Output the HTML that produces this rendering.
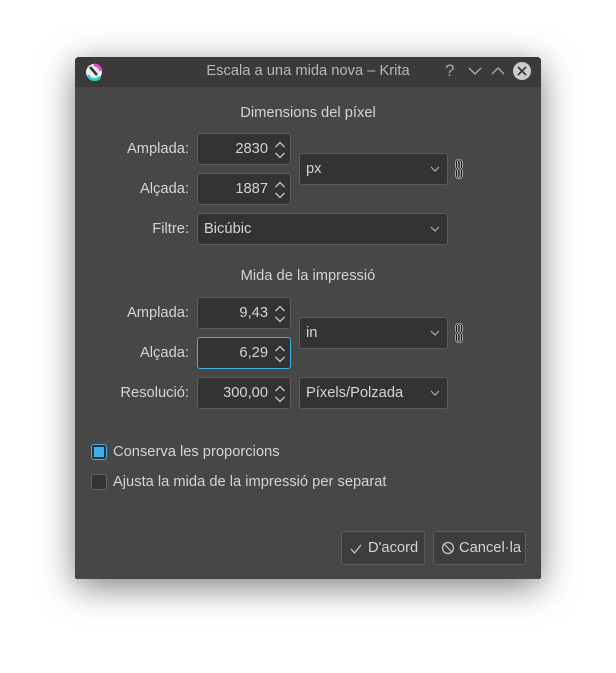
<!DOCTYPE html>
<html><head><style>
body{margin:0;width:616px;height:673px;background:#fff;font-family:"Liberation Sans","DejaVu Sans",sans-serif;font-size:14.7px;color:#d4d4d4;position:relative;overflow:hidden}
.win{position:absolute;left:75px;top:57px;width:466px;height:522px;background:#474747;border-radius:4px 4px 2px 2px;box-shadow:0 8px 34px rgba(0,0,0,.5)}
.tb{position:absolute;left:0;top:0;width:466px;height:30px;background:#3a3a3a;border-radius:4px 4px 0 0}
.a{position:absolute}
.lbl{position:absolute;text-align:right;width:120px;left:69px;line-height:33px}
.f{position:absolute;background:#333;border:1px solid #5c5c5c;border-radius:3px;box-sizing:border-box;line-height:31px}
.num{text-align:right;padding-right:22px;width:94px;left:197px;height:32px}
.sp{position:absolute;right:3px;top:6px}
.cb{position:absolute;left:299px;width:149px;height:32px;padding-left:6px}
.chev{position:absolute;right:6px;top:11px}
.h{position:absolute;width:466px;text-align:center;left:75px}
.btn{position:absolute;height:34px;border:1px solid #5c5c5c;border-radius:3px;background:#3d3d3d;box-sizing:border-box;line-height:33px}
</style></head><body>
<div class="win"><div class="tb"></div></div>
<svg class="a" style="left:85px;top:63px" width="18" height="18"><circle cx="9" cy="9" r="8" fill="#eee"/><path d="M3 12a7 7 0 0 0 12 2" stroke="#3cc" stroke-width="3" fill="none"/><path d="M9 2a7 7 0 0 1 7 6" stroke="#e4c" stroke-width="3" fill="none"/><path d="M5 4l7 8" stroke="#333" stroke-width="2.5"/></svg>
<div class="a" style="left:75px;width:466px;top:63px;text-align:center;color:#b8b8b8">Escala a una mida nova – Krita</div>
<div class="a" style="left:445px;top:61px;color:#aaa;font-size:17px">?</div>
<svg class="a" style="left:467px;top:64px" width="16" height="14"><path d="M2 4l6 6 6-6" stroke="#aaa" stroke-width="1.4" fill="none"/></svg>
<svg class="a" style="left:490px;top:64px" width="16" height="14"><path d="M2 10l6-6 6 6" stroke="#aaa" stroke-width="1.4" fill="none"/></svg>
<svg class="a" style="left:513px;top:62px" width="18" height="18"><circle cx="9" cy="9" r="9" fill="#ccc"/><path d="M5 5l8 8M13 5l-8 8" stroke="#3a3a3a" stroke-width="1.8"/></svg>

<div class="h" style="top:105px">Dimensions del píxel</div>
<div class="lbl" style="top:133px">Amplada:</div>
<div class="f num" style="top:133px">2830<svg class="sp" width="14" height="20"><path d="M2.5 7l4.5-4.5 4.5 4.5M2.5 13l4.5 4.5 4.5-4.5" stroke="#c4c4c4" stroke-width="1.3" fill="none"/></svg></div>
<div class="lbl" style="top:173px">Alçada:</div>
<div class="f num" style="top:173px">1887<svg class="sp" width="14" height="20"><path d="M2.5 7l4.5-4.5 4.5 4.5M2.5 13l4.5 4.5 4.5-4.5" stroke="#c4c4c4" stroke-width="1.3" fill="none"/></svg></div>
<div class="f cb" style="top:153px">px<svg class="chev" width="12" height="8"><path d="M2 2l4 4 4-4" stroke="#bbb" fill="none"/></svg></div>
<svg class="a" style="left:455px;top:159px" width="8" height="20"><rect x="1.5" y="1" width="5" height="9" rx="2" fill="none" stroke="#fff" stroke-width="2"/><rect x="1.5" y="10" width="5" height="9" rx="2" fill="none" stroke="#fff" stroke-width="2"/><rect x="1.5" y="1" width="5" height="9" rx="2" fill="none" stroke="#000" stroke-width=".9"/><rect x="1.5" y="10" width="5" height="9" rx="2" fill="none" stroke="#000" stroke-width=".9"/></svg>
<div class="lbl" style="top:213px">Filtre:</div>
<div class="f cb" style="top:213px;left:197px;width:251px">Bicúbic<svg class="chev" width="12" height="8"><path d="M2 2l4 4 4-4" stroke="#bbb" fill="none"/></svg></div>

<div class="h" style="top:268px">Mida de la impressió</div>
<div class="lbl" style="top:297px">Amplada:</div>
<div class="f num" style="top:297px">9,43<svg class="sp" width="14" height="20"><path d="M2.5 7l4.5-4.5 4.5 4.5M2.5 13l4.5 4.5 4.5-4.5" stroke="#c4c4c4" stroke-width="1.3" fill="none"/></svg></div>
<div class="lbl" style="top:337px">Alçada:</div>
<div class="f num" style="top:337px;border-color:#3daee9">6,29<svg class="sp" width="14" height="20"><path d="M2.5 7l4.5-4.5 4.5 4.5M2.5 13l4.5 4.5 4.5-4.5" stroke="#c4c4c4" stroke-width="1.3" fill="none"/></svg></div>
<div class="f cb" style="top:317px">in<svg class="chev" width="12" height="8"><path d="M2 2l4 4 4-4" stroke="#bbb" fill="none"/></svg></div>
<svg class="a" style="left:455px;top:323px" width="8" height="20"><rect x="1.5" y="1" width="5" height="9" rx="2" fill="none" stroke="#fff" stroke-width="2"/><rect x="1.5" y="10" width="5" height="9" rx="2" fill="none" stroke="#fff" stroke-width="2"/><rect x="1.5" y="1" width="5" height="9" rx="2" fill="none" stroke="#000" stroke-width=".9"/><rect x="1.5" y="10" width="5" height="9" rx="2" fill="none" stroke="#000" stroke-width=".9"/></svg>
<div class="lbl" style="top:377px">Resolució:</div>
<div class="f num" style="top:377px">300,00<svg class="sp" width="14" height="20"><path d="M2.5 7l4.5-4.5 4.5 4.5M2.5 13l4.5 4.5 4.5-4.5" stroke="#c4c4c4" stroke-width="1.3" fill="none"/></svg></div>
<div class="f cb" style="top:377px">Píxels/Polzada<svg class="chev" width="12" height="8"><path d="M2 2l4 4 4-4" stroke="#bbb" fill="none"/></svg></div>

<div class="a" style="left:91px;top:444px;width:16px;height:16px;border:1px solid #3daee9;border-radius:3px;box-sizing:border-box;background:#333"><div style="margin:2px;width:10px;height:10px;background:#3daee9"></div></div>
<div class="a" style="left:113px;top:444px">Conserva les proporcions</div>
<div class="a" style="left:91px;top:474px;width:16px;height:16px;border:1px solid #666;border-radius:3px;box-sizing:border-box;background:#333"></div>
<div class="a" style="left:113px;top:474px">Ajusta la mida de la impressió per separat</div>

<div class="btn" style="left:341px;top:531px;width:84px;padding-left:26px">D'acord<svg class="a" style="left:8px;top:11px" width="12" height="12"><path d="M1 6l3.5 4L11 2" stroke="#ccc" stroke-width="1.2" fill="none"/></svg></div>
<div class="btn" style="left:433px;top:531px;width:93px;padding-left:25px">Cancel·la<svg class="a" style="left:7px;top:9px" width="14" height="14"><circle cx="7" cy="7" r="5.5" stroke="#ccc" stroke-width="1.2" fill="none"/><path d="M3 3l8 8" stroke="#ccc" stroke-width="1.2"/></svg></div>
</body></html>
